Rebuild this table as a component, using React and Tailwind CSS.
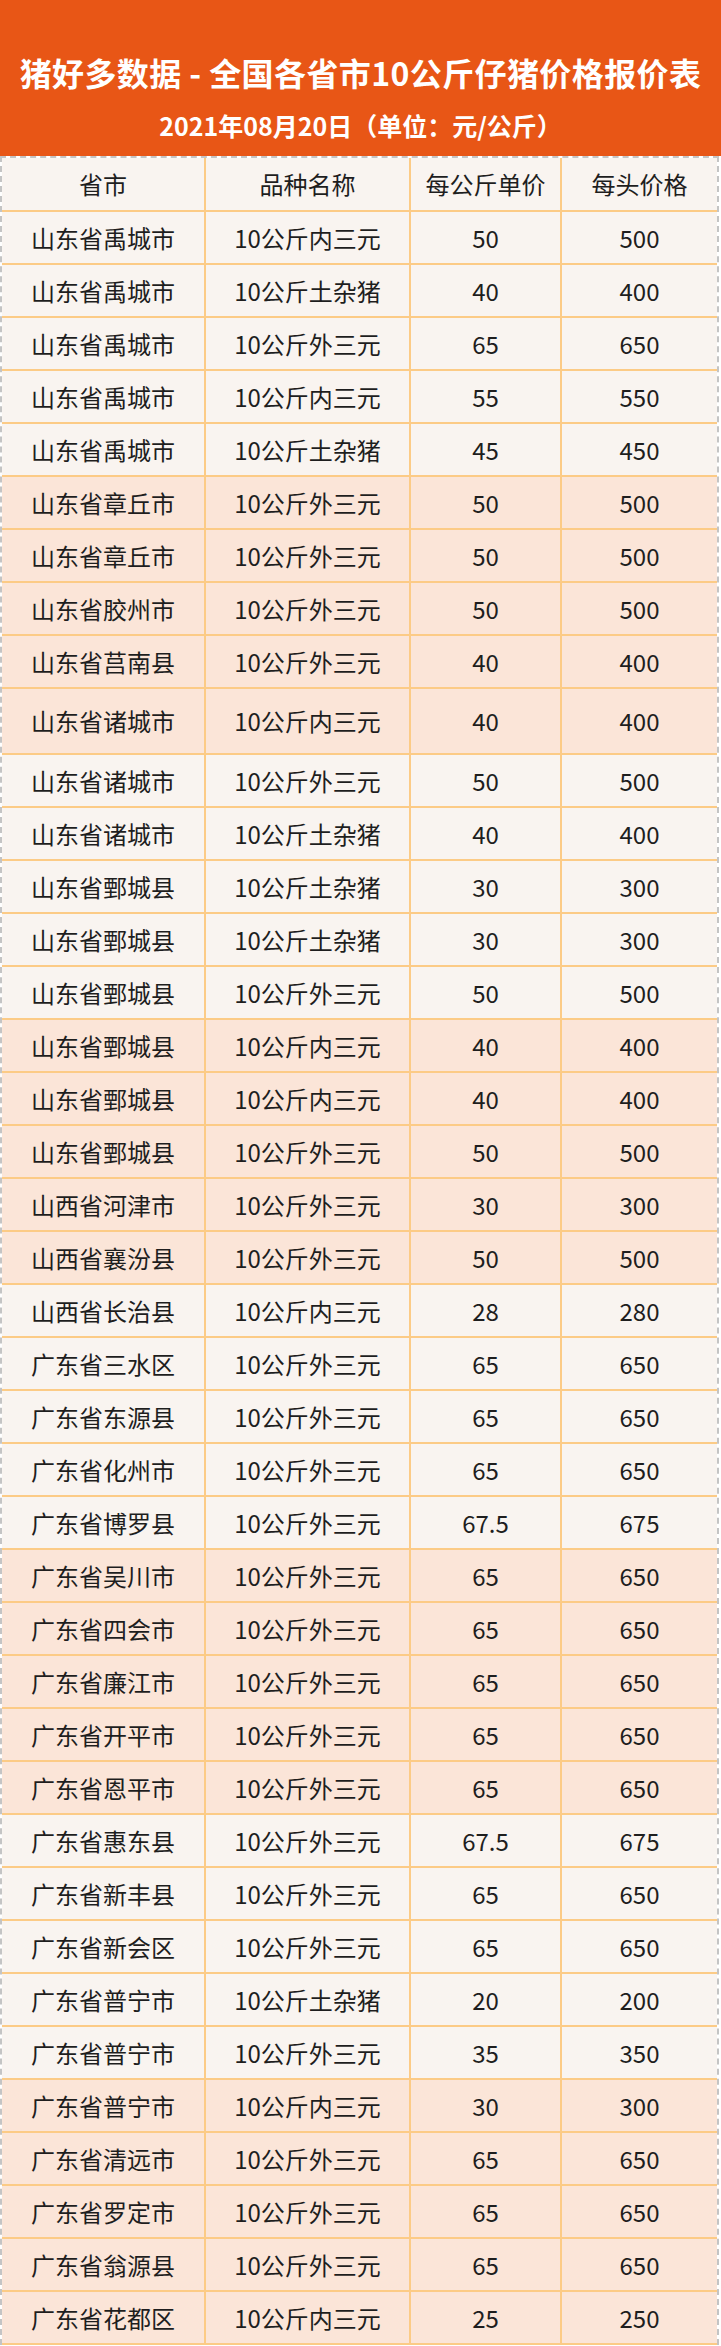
import React from "react";

const rows = [
  ["山东省禹城市", "10公斤内三元", "50", "500"],
  ["山东省禹城市", "10公斤土杂猪", "40", "400"],
  ["山东省禹城市", "10公斤外三元", "65", "650"],
  ["山东省禹城市", "10公斤内三元", "55", "550"],
  ["山东省禹城市", "10公斤土杂猪", "45", "450"],
  ["山东省章丘市", "10公斤外三元", "50", "500"],
  ["山东省章丘市", "10公斤外三元", "50", "500"],
  ["山东省胶州市", "10公斤外三元", "50", "500"],
  ["山东省莒南县", "10公斤外三元", "40", "400"],
  ["山东省诸城市", "10公斤内三元", "40", "400"],
  ["山东省诸城市", "10公斤外三元", "50", "500"],
  ["山东省诸城市", "10公斤土杂猪", "40", "400"],
  ["山东省鄄城县", "10公斤土杂猪", "30", "300"],
  ["山东省鄄城县", "10公斤土杂猪", "30", "300"],
  ["山东省鄄城县", "10公斤外三元", "50", "500"],
  ["山东省鄄城县", "10公斤内三元", "40", "400"],
  ["山东省鄄城县", "10公斤内三元", "40", "400"],
  ["山东省鄄城县", "10公斤外三元", "50", "500"],
  ["山西省河津市", "10公斤外三元", "30", "300"],
  ["山西省襄汾县", "10公斤外三元", "50", "500"],
  ["山西省长治县", "10公斤内三元", "28", "280"],
  ["广东省三水区", "10公斤外三元", "65", "650"],
  ["广东省东源县", "10公斤外三元", "65", "650"],
  ["广东省化州市", "10公斤外三元", "65", "650"],
  ["广东省博罗县", "10公斤外三元", "67.5", "675"],
  ["广东省吴川市", "10公斤外三元", "65", "650"],
  ["广东省四会市", "10公斤外三元", "65", "650"],
  ["广东省廉江市", "10公斤外三元", "65", "650"],
  ["广东省开平市", "10公斤外三元", "65", "650"],
  ["广东省恩平市", "10公斤外三元", "65", "650"],
  ["广东省惠东县", "10公斤外三元", "67.5", "675"],
  ["广东省新丰县", "10公斤外三元", "65", "650"],
  ["广东省新会区", "10公斤外三元", "65", "650"],
  ["广东省普宁市", "10公斤土杂猪", "20", "200"],
  ["广东省普宁市", "10公斤外三元", "35", "350"],
  ["广东省普宁市", "10公斤内三元", "30", "300"],
  ["广东省清远市", "10公斤外三元", "65", "650"],
  ["广东省罗定市", "10公斤外三元", "65", "650"],
  ["广东省翁源县", "10公斤外三元", "65", "650"],
  ["广东省花都区", "10公斤内三元", "25", "250"],
];

function Row({ cells, peach, tall, header }) {
  return (
    <div
      className={
        "flex border-b-2 border-[#FCCB86] " +
        (header ? "h-[54px] " : tall ? "h-[66px] " : "h-[53px] ") +
        (peach ? "bg-[#FBE5D8]" : "bg-[#F9F4F0]")
      }
    >
      <div className="w-[204px] shrink-0 flex items-center justify-center border-r-2 border-[#FCCB86]">
        {cells[0]}
      </div>
      <div className="w-[205px] shrink-0 flex items-center justify-center border-r-2 border-[#FCCB86]">
        {cells[1]}
      </div>
      <div className="w-[151px] shrink-0 flex items-center justify-center border-r-2 border-[#FCCB86]">
        {cells[2]}
      </div>
      <div className="flex-1 flex items-center justify-center">{cells[3]}</div>
    </div>
  );
}

export default function App() {
  return (
    <div
      className="w-[721px] bg-white"
      style={{ fontFamily: '"Noto Sans CJK SC", "Noto Sans", sans-serif' }}
    >
      <div className="h-[156px] bg-[#E85616] flex flex-col items-center text-white font-bold">
        <div className="mt-[51px] text-[32px] leading-[42px] tracking-[0.4px]">
          猪好多数据 - 全国各省市10公斤仔猪价格报价表
        </div>
        <div className="mt-[16px] text-[25px] leading-[33px]">
          2021年08月20日（单位：元/公斤）
        </div>
      </div>
      <div className="w-[719px] border-2 border-b-0 border-dashed border-[#C4C4C4] text-[24px] leading-[34px] text-[#1E1E1E]">
        <Row header cells={["省市", "品种名称", "每公斤单价", "每头价格"]} />
        {rows.map((r, i) => (
          <Row
            key={i}
            cells={r}
            peach={Math.floor(i / 5) % 2 === 1}
            tall={i === 9}
          />
        ))}
      </div>
    </div>
  );
}
